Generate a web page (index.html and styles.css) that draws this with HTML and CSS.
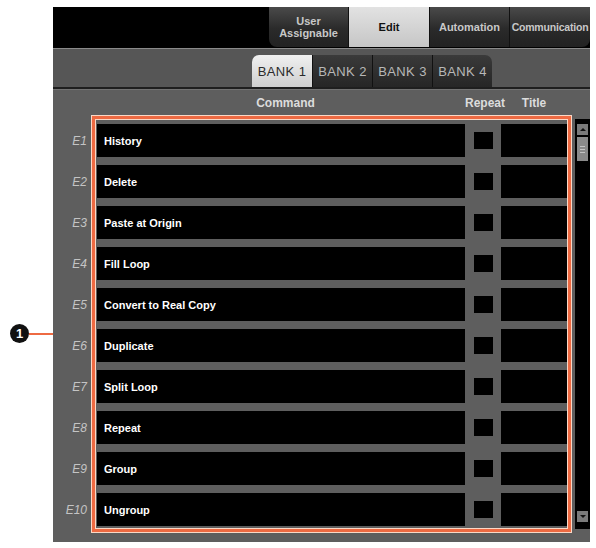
FILE: index.html
```html
<!DOCTYPE html>
<html>
<head>
    <meta charset="UTF-8">
    <meta name="viewport" content="width=device-width, initial-scale=1.0">
    <link rel="stylesheet" href="styles.css">
</head>
<body>
    <div class="page">
        <!-- Выноска 1 -->
        <div class="callout">
            <span class="callout-num">1</span>
            <span class="callout-line"></span>
        </div>

        <div class="panel">
            <!-- Вкладки режимов -->
            <div class="top-bar">
                <div class="modes">
                    <div class="mode first">User<br>Assignable</div>
                    <div class="mode active">Edit</div>
                    <div class="mode">Automation</div>
                    <div class="mode last">Communication</div>
                </div>
            </div>

            <!-- Банки -->
            <div class="bank-bar">
                <div class="banks">
                    <div class="bank first active">BANK 1</div>
                    <div class="bank">BANK 2</div>
                    <div class="bank">BANK 3</div>
                    <div class="bank last">BANK 4</div>
                </div>
            </div>

            <div class="content">
                <div class="head">
                    <span></span>
                    <span class="head-command">Command</span>
                    <span>Repeat</span>
                    <span>Title</span>
                </div>

                <div class="body">
                    <div class="rows">
                        <div class="row"><span class="key">E1</span><span class="cmd">History</span><span class="rep"><i></i></span><span class="title"></span></div>
                        <div class="row"><span class="key">E2</span><span class="cmd">Delete</span><span class="rep"><i></i></span><span class="title"></span></div>
                        <div class="row"><span class="key">E3</span><span class="cmd">Paste at Origin</span><span class="rep"><i></i></span><span class="title"></span></div>
                        <div class="row"><span class="key">E4</span><span class="cmd">Fill Loop</span><span class="rep"><i></i></span><span class="title"></span></div>
                        <div class="row"><span class="key">E5</span><span class="cmd">Convert to Real Copy</span><span class="rep"><i></i></span><span class="title"></span></div>
                        <div class="row"><span class="key">E6</span><span class="cmd">Duplicate</span><span class="rep"><i></i></span><span class="title"></span></div>
                        <div class="row"><span class="key">E7</span><span class="cmd">Split Loop</span><span class="rep"><i></i></span><span class="title"></span></div>
                        <div class="row"><span class="key">E8</span><span class="cmd">Repeat</span><span class="rep"><i></i></span><span class="title"></span></div>
                        <div class="row"><span class="key">E9</span><span class="cmd">Group</span><span class="rep"><i></i></span><span class="title"></span></div>
                        <div class="row"><span class="key">E10</span><span class="cmd">Ungroup</span><span class="rep"><i></i></span><span class="title"></span></div>
                    </div>

                    <div class="scrollbar">
                        <div class="sb-btn up"></div>
                        <div class="sb-thumb"><span></span><span></span><span></span></div>
                        <div class="sb-space"></div>
                        <div class="sb-btn down"></div>
                    </div>

                    <!-- Рамка выделения списка команд -->
                    <div class="highlight"></div>
                </div>
            </div>
        </div>
    </div>
</body>
</html>
```

FILE: styles.css
```css
body {
    margin: 0;
    background: white;
    font-family: "Liberation Sans", Arial, sans-serif;
}

.page {
    position: relative;
    width: 596px;
    height: 548px;
}

.panel {
    position: relative;
    width: 537px;
    margin: 7px 0 0 53px;
    background: #5e5e5e;
}

/* ---- выноска ---- */
.callout {
    position: absolute;
    left: 10px;
    top: 317px;
    display: flex;
    align-items: center;
}

.callout-num {
    width: 19px;
    height: 19px;
    border-radius: 50%;
    background: #111;
    color: white;
    font-weight: bold;
    font-size: 13px;
    line-height: 19px;
    text-align: center;
}

.callout-line {
    width: 64px;
    height: 2px;
    background: #ee6a42;
}

/* ---- вкладки режимов ---- */
.top-bar {
    height: 41px;
    background: #000;
    display: flex;
    justify-content: flex-end;
}

.modes {
    display: flex;
    height: 40px;
}

.mode {
    width: 79px;
    display: flex;
    align-items: center;
    justify-content: center;
    text-align: center;
    font-size: 11px;
    font-weight: bold;
    line-height: 12px;
    color: #c8c8c8;
    background: linear-gradient(#4a4a4a, #2a2a2a 55%, #222);
    border-left: 1px solid #111;
}

.mode.first {
    border-left: none;
    border-bottom-left-radius: 8px;
}

.mode.last {
    width: 80px;
    font-size: 10.5px;
    letter-spacing: -0.2px;
    border-bottom-right-radius: 8px;
}

.mode.active {
    width: 80px;
    color: #111;
    background: linear-gradient(#e2e2e2, #c6c6c6);
}

/* ---- банки ---- */
.bank-bar {
    height: 38px;
    border-top: 1px solid #8a8a8a;
    border-bottom: 2px solid #1e1e1e;
    background: #565656;
    display: flex;
    align-items: flex-end;
    padding-left: 199px;
}

.banks {
    display: flex;
    height: 32px;
}

.bank {
    width: 59px;
    display: flex;
    align-items: center;
    justify-content: center;
    font-size: 13px;
    letter-spacing: 0.4px;
    color: #b8b8b8;
    background: linear-gradient(#3a3a3a, #262626);
    border-left: 1px solid #111;
}

.bank.first {
    width: 60px;
    border-left: none;
    border-top-left-radius: 7px;
}

.bank.last {
    border-top-right-radius: 7px;
}

.bank.active {
    color: #2a2a2a;
    background: linear-gradient(#f0f0f0, #cfcfcf);
}

/* ---- список команд ---- */
.content {
    height: 452px;
    border-top: 1px solid #727272;
}

.head,
.row {
    display: grid;
    grid-template-columns: 35px 377px 36px 66px;
}

.head {
    height: 26px;
    align-items: center;
    text-align: center;
    font-size: 12px;
    font-weight: bold;
    color: #dcdcdc;
}

.head-command {
    padding-left: 18px;
}

.body {
    position: relative;
    display: flex;
    height: 426px;
}

.rows {
    display: flex;
    flex-direction: column;
    gap: 8px;
    padding-top: 8px;
}

.row {
    height: 33px;
}

.key {
    align-self: center;
    text-align: right;
    padding-right: 1px;
    font-style: italic;
    font-size: 12px;
    color: #c4c4c4;
}

.cmd {
    margin-left: 9px;
    background: #000;
    color: white;
    font-size: 11px;
    font-weight: bold;
    display: flex;
    align-items: center;
    padding-left: 7px;
}

.rep {
    display: flex;
    align-items: center;
    justify-content: center;
}

.rep i {
    width: 19px;
    height: 17px;
    background: #000;
}

.title {
    background: #000;
}

/* ---- полоса прокрутки ---- */
.scrollbar {
    width: 15px;
    height: 410px;
    margin: 3px 0 0 8px;
    background: #000;
    display: flex;
    flex-direction: column;
    align-items: center;
    padding-top: 5px;
    box-sizing: border-box;
}

.sb-btn {
    width: 11px;
    height: 11px;
    background: #7a7a7a;
    display: flex;
    align-items: center;
    justify-content: center;
}

.sb-btn::after {
    content: '';
    border-left: 3px solid transparent;
    border-right: 3px solid transparent;
}

.sb-btn.up::after {
    border-bottom: 3px solid #111;
}

.sb-btn.down::after {
    border-top: 3px solid #111;
}

.sb-thumb {
    width: 11px;
    height: 24px;
    margin-top: 2px;
    background: #8a8a8a;
    display: flex;
    flex-direction: column;
    justify-content: center;
    align-items: center;
    gap: 2px;
}

.sb-thumb span {
    width: 5px;
    height: 1px;
    background: #c4c4c4;
}

.sb-space {
    flex: 1;
}

.sb-btn.down {
    margin-bottom: 7px;
}

.highlight {
    position: absolute;
    left: 39px;
    top: 0;
    width: 473px;
    height: 410px;
    border: 3px solid #ee6a42;
    box-shadow: 0 0 0 1px #fbd8c6, inset 0 0 0 1px #fbd8c6;
}
```
